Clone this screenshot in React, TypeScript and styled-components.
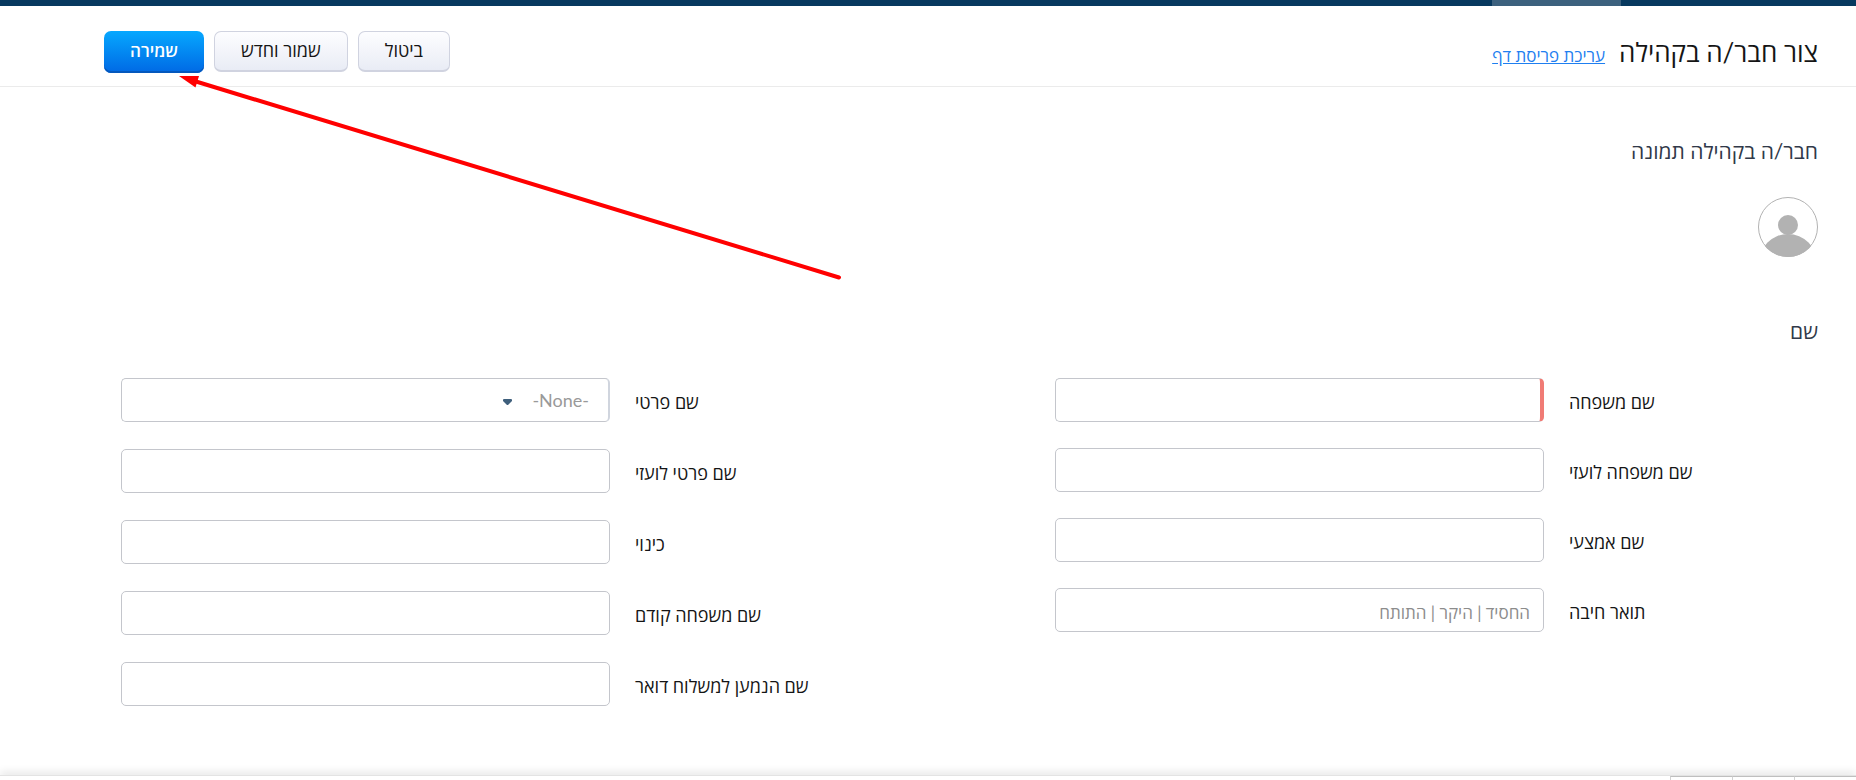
import React from "react";
import styled, { createGlobalStyle, css } from "styled-components";

const GlobalStyle = createGlobalStyle`
  *, *::before, *::after { box-sizing: border-box; }
  body {
    margin: 0;
    background: #fff;
    color: #151515;
    font-family: Lato, "Open Sans", sans-serif;
    font-size: 16px;
  }
`;

const Page = styled.div`
  position: relative;
  display: flex;
  flex-direction: column;
  min-height: 100vh;
  overflow: hidden;
`;

const TopBar = styled.nav`
  display: flex;
  height: 6px;
  padding-right: 235px;
  background: #07395f;
`;

const ActiveTab = styled.span`
  width: 129px;
  background: #3c617e;
`;

const Header = styled.header`
  display: flex;
  align-items: center;
  justify-content: space-between;
  height: 81px;
  padding: 12px 38px 0 104px;
  border-bottom: 1px solid #ebebeb;
`;

const Heading = styled.div`
  display: flex;
  align-items: baseline;
  gap: 14px;
`;

const Title = styled.h1`
  margin: 0;
  font-size: 26px;
  line-height: 34px;
  font-weight: 400;
`;

const LayoutLink = styled.a`
  color: #1f7ff0;
  font-size: 17px;
  line-height: 24px;
`;

const Actions = styled.div`
  display: flex;
  align-items: flex-start;
  gap: 10px;
`;

const Button = styled.button<{ $primary?: boolean }>`
  height: 41px;
  padding: 0 26px 3px;
  border: 1px solid #d0d3e0;
  border-bottom-width: 2px;
  border-radius: 7px;
  background: linear-gradient(#fdfdff, #e9ecf5);
  color: #151515;
  font: inherit;
  font-size: 18px;
  cursor: pointer;
  ${(p) =>
    p.$primary &&
    css`
      height: 42px;
      border: 0;
      background: linear-gradient(#06a8ff, #0069e4);
      box-shadow: inset 0 -2px 0 #0458bd;
      color: #fff;
      font-size: 17px;
      font-weight: 600;
    `}
`;

const Main = styled.main`
  flex: 1;
  padding: 48px 38px 60px 121px;
`;

const SectionTitle = styled.h2`
  margin: 0;
  color: #313949;
  font-size: 21px;
  line-height: 32px;
  font-weight: 400;
`;

const Avatar = styled.svg`
  display: block;
  width: 60px;
  height: 60px;
  margin: 30px 0 58px;
`;

const Form = styled.form`
  display: grid;
  grid-template-columns: 1fr 1fr;
  align-items: start;
  column-gap: 171px;
  margin-top: 31px;
`;

const Column = styled.div<{ $gap: number }>`
  display: grid;
  gap: ${(p) => p.$gap}px;
`;

const Field = styled.div`
  display: grid;
  grid-template-columns: 249px 1fr;
  align-items: center;
  column-gap: 25px;
`;

const Label = styled.label`
  padding-top: 4px;
  font-size: 18px;
  line-height: 24px;
  text-align: left;
`;

const control = css`
  display: block;
  width: 100%;
  height: 44px;
  border: 1px solid #c4c6cc;
  border-radius: 5px;
  background: #fff;
  font: inherit;
`;

const TextInput = styled.input<{ $required?: boolean }>`
  ${control}
  padding: 4px 13px 0;
  font-size: 17px;
  ${(p) => p.$required && css`border-right: 4px solid #f07b75;`}
  &::placeholder { color: #8c8c8c; opacity: 1; }
`;

const SelectBox = styled.div`
  position: relative;
`;

const Select = styled.select`
  ${control}
  padding: 0 19px;
  border-right: 2px solid #d0d5de;
  color: #999;
  font-size: 18px;
  appearance: none;
`;

const Caret = styled.svg`
  position: absolute;
  top: 21px;
  right: 98px;
  width: 9px;
  height: 6px;
  pointer-events: none;
`;

const Footer = styled.footer`
  display: flex;
  height: 5px;
  border-top: 1px solid #e3e3e3;
  box-shadow: 0 -2px 8px #00000026;
`;

const FooterTab = styled.span`
  width: 62px;
  border-top: 1px solid #bfbfbf;
  border-left: 1px solid #d2d2d2;
`;

const Arrow = styled.svg`
  position: absolute;
  top: 74px;
  left: 178px;
  width: 666px;
  height: 210px;
  pointer-events: none;
`;

type FieldSpec = {
  id: string;
  label: string;
  required?: boolean;
  placeholder?: string;
  options?: string[];
};

const familyFields: FieldSpec[] = [
  { id: "family", label: "שם משפחה", required: true },
  { id: "family-latin", label: "שם משפחה לועזי" },
  { id: "middle", label: "שם אמצעי" },
  { id: "affection", label: "תואר חיבה", placeholder: "החסיד | היקר | התותח" },
];

const givenFields: FieldSpec[] = [
  { id: "given", label: "שם פרטי", options: ["-None-"] },
  { id: "given-latin", label: "שם פרטי לועזי" },
  { id: "nickname", label: "כינוי" },
  { id: "former-family", label: "שם משפחה קודם" },
  { id: "mail-name", label: "שם הנמען למשלוח דואר" },
];

function FormField({ id, label, required, placeholder, options }: FieldSpec) {
  return (
    <Field>
      <Label htmlFor={id}>{label}</Label>
      {options ? (
        <SelectBox>
          <Select id={id}>
            {options.map((o) => (
              <option key={o}>{o}</option>
            ))}
          </Select>
          <Caret viewBox="0 0 9 6" aria-hidden="true">
            <path d="M1 0h7q1 0 1 1v1L5 6H4L0 2V1q0-1 1-1z" fill="#3f5f7c" />
          </Caret>
        </SelectBox>
      ) : (
        <TextInput id={id} type="text" placeholder={placeholder} $required={required} />
      )}
    </Field>
  );
}

export default function App() {
  return (
    <Page dir="rtl" lang="he">
      <GlobalStyle />
      <TopBar>
        <ActiveTab />
      </TopBar>
      <Header>
        <Heading>
          <Title>צור חבר/ה בקהילה</Title>
          <LayoutLink href="#layout">עריכת פריסת דף</LayoutLink>
        </Heading>
        <Actions>
          <Button type="button">ביטול</Button>
          <Button type="button">שמור וחדש</Button>
          <Button type="submit" form="member" $primary>שמירה</Button>
        </Actions>
      </Header>
      <Main>
        <SectionTitle>חבר/ה בקהילה תמונה</SectionTitle>
        <Avatar viewBox="0 0 60 60" aria-hidden="true">
          <clipPath id="avatar-clip">
            <circle cx="30" cy="30" r="30" />
          </clipPath>
          <g fill="#b2b2b2" clipPath="url(#avatar-clip)">
            <circle cx="30" cy="28" r="10" />
            <circle cx="30" cy="66" r="29" />
          </g>
          <circle cx="30" cy="30" r="29.5" fill="none" stroke="#b2b2b2" />
        </Avatar>
        <SectionTitle>שם</SectionTitle>
        <Form id="member" onSubmit={(e) => e.preventDefault()}>
          <Column $gap={26}>
            {familyFields.map((f) => (
              <FormField key={f.id} {...f} />
            ))}
          </Column>
          <Column $gap={27}>
            {givenFields.map((f) => (
              <FormField key={f.id} {...f} />
            ))}
          </Column>
        </Form>
      </Main>
      <Footer>
        <FooterTab />
        <FooterTab />
        <FooterTab />
      </Footer>
      <Arrow viewBox="0 0 666 210" aria-hidden="true">
        <path d="M18 7.500L661 203.500" stroke="#f00" strokeWidth="4" strokeLinecap="round" />
        <path d="M1 2L21 2L17.500 13.500z" fill="#f00" />
      </Arrow>
    </Page>
  );
}
